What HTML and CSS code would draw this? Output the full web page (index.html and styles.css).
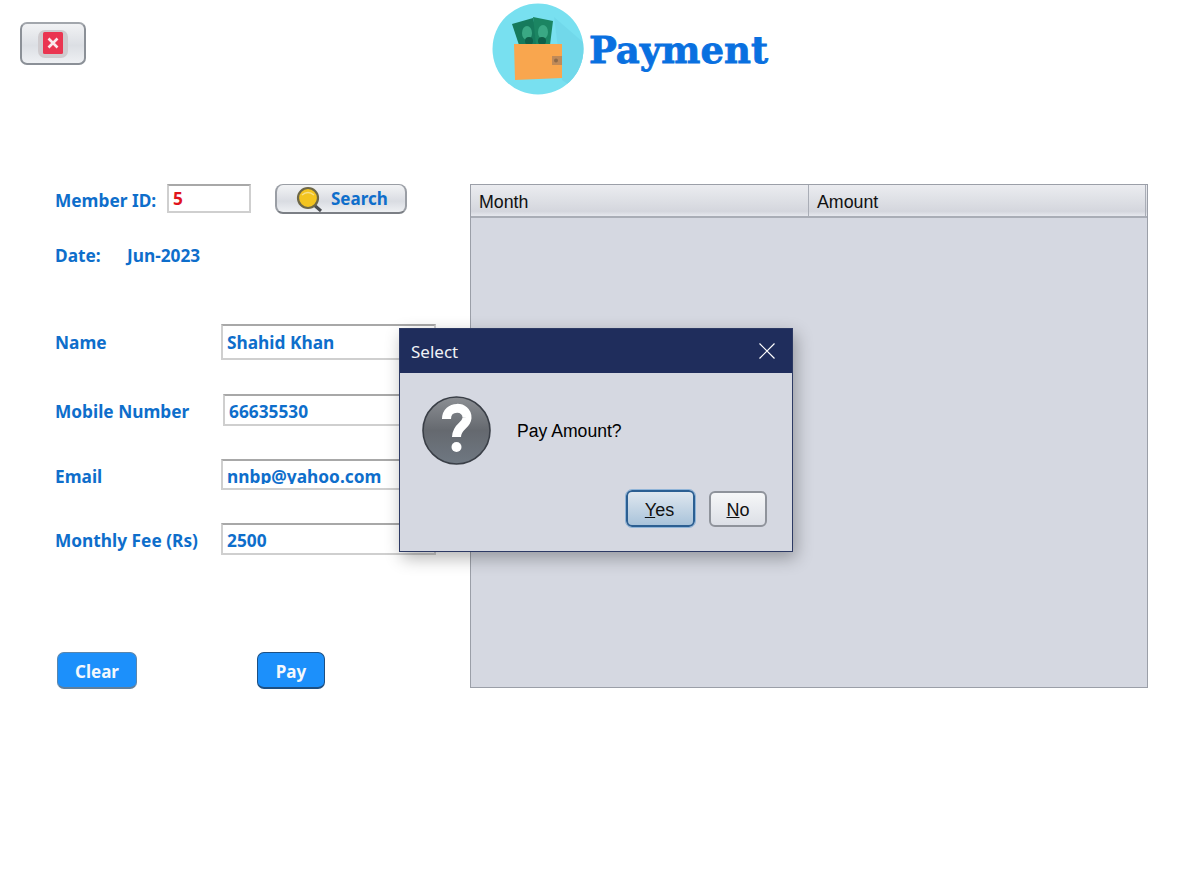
FILE: index.html
```html
<!DOCTYPE html>
<html lang="en">
<head>
<meta charset="UTF-8">
<meta name="viewport" content="width=device-width, initial-scale=1.0">
<title>Payment</title>
<link rel="stylesheet" href="styles.css">
</head>
<body>
<div class="page">
    <header class="top">
        <button class="close-btn" aria-label="Close">
            <svg class="close-icon" width="30" height="30" viewBox="0 0 30 30">
                <rect x="0" y="1" width="30" height="28" rx="7" fill="#cfcbce"/>
                <rect x="5" y="3" width="20" height="22" rx="1.5" fill="#ea3550"/>
                <path d="M10.500 9.500 L19.500 18.500 M19.500 9.500 L10.500 18.500" stroke="#fbe9ec" stroke-width="2.6" fill="none"/>
            </svg>
        </button>
        <div class="brand">
            <svg class="brand-logo" width="92" height="92" viewBox="0 0 92 92">
                <defs><clipPath id="disc"><circle cx="46" cy="46" r="45.5"/></clipPath></defs>
                <circle cx="46" cy="46" r="45.5" fill="#78e0f0"/>
                <g clip-path="url(#disc)">
                    <polygon points="62,14 92,40 92,92 70,77" fill="#71d8ea"/>
                </g>
                <polygon points="20,21 41,15 48,42 27,42" fill="#167a5c"/>
                <polygon points="41,14 61,18 58,42 44,42" fill="#1b8562"/>
                <ellipse cx="35" cy="30" rx="5" ry="7" fill="#3aa884"/>
                <ellipse cx="51" cy="29" rx="5" ry="7" fill="#3aa884"/>
                <circle cx="37" cy="38" r="4" fill="#0f5f48"/>
                <circle cx="50" cy="38" r="4" fill="#0f5f48"/>
                <polygon points="22,41 70,41 70,75 23,77" fill="#f9a64e"/>
                <rect x="60" y="53" width="10" height="9" fill="#c08a58"/>
                <circle cx="64" cy="57.500" r="2" fill="#8f6a48"/>
            </svg>
            <h1 class="brand-title">Payment</h1>
        </div>
    </header>

    <main class="content">
        <section class="form">
            <div class="row row-member">
                <label class="label label-member nudge">Member ID:</label>
                <div class="field field-id"><span class="id-value">5</span></div>
                <button class="search-btn">
                    <svg class="search-icon" width="28" height="28" viewBox="0 0 28 28">
                        <line x1="17" y1="18" x2="25" y2="25" stroke="#4a4d52" stroke-width="3"/>
                        <circle cx="12" cy="12" r="10" fill="#f3c41f" stroke="#6d6748" stroke-width="2.2"/>
                        <path d="M6 9 Q12 4 18 9" stroke="#f7e08a" stroke-width="1.5" fill="none"/>
                    </svg>
                    Search
                </button>
            </div>
            <div class="row row-date">
                <span class="label label-date">Date:</span>
                <span class="label">Jun-2023</span>
            </div>
            <div class="row row-name">
                <label class="label label-wide">Name</label>
                <div class="field field-wide">Shahid Khan</div>
            </div>
            <div class="row row-mobile">
                <label class="label label-wide nudge">Mobile Number</label>
                <div class="field field-wide field-shift nudge">66635530</div>
            </div>
            <div class="row row-email">
                <label class="label label-wide nudge-more">Email</label>
                <div class="field field-wide field-clip"><span>nnbp@yahoo.com</span></div>
            </div>
            <div class="row row-fee">
                <label class="label label-wide nudge">Monthly Fee (Rs)</label>
                <div class="field field-wide nudge">2500</div>
            </div>
            <div class="actions">
                <button class="blue-btn btn-clear">Clear</button>
                <button class="blue-btn btn-pay">Pay</button>
            </div>
        </section>

        <section class="table">
            <div class="table-head">
                <div class="col col-month">Month</div>
                <div class="col col-amount">Amount</div>
            </div>
        </section>
    </main>

    <div class="dialog">
        <div class="dialog-title">
            <span>Select</span>
            <svg width="16" height="16" viewBox="0 0 16 16">
                <path d="M0.5 0.500 L15.500 15.500 M15.500 0.500 L0.500 15.500" stroke="#fff" stroke-width="1.2" fill="none"/>
            </svg>
        </div>
        <div class="dialog-body">
            <div class="dialog-msg">
                <svg class="question" width="69" height="69" viewBox="0 0 69 69">
                    <defs>
                        <linearGradient id="qfill" x1="0" y1="0" x2="0" y2="1">
                            <stop offset="0" stop-color="#8c8f94"/>
                            <stop offset=".5" stop-color="#65696f"/>
                            <stop offset="1" stop-color="#6f7882"/>
                        </linearGradient>
                    </defs>
                    <circle cx="34.500" cy="34.500" r="33.500" fill="url(#qfill)" stroke="#3a3f47" stroke-width="1.6"/>
                    <path d="M24.500 23 C24.500 9 45.500 9 45 22 C44.500 30 34.500 30 34.500 41" fill="none" stroke="#fff" stroke-width="9"/>
                    <circle cx="34.500" cy="51" r="5" fill="#fff"/>
                </svg>
                <p class="dialog-text">Pay Amount?</p>
            </div>
            <div class="dialog-btns">
                <button class="opt-btn opt-yes"><u>Y</u>es</button>
                <button class="opt-btn opt-no"><u>N</u>o</button>
            </div>
        </div>
    </div>
</div>
</body>
</html>
```

FILE: styles.css
```css
* {
    box-sizing: border-box;
}
body {
    margin: 0;
    background: #fff;
    font-family: "Noto Sans", sans-serif;
}
.page {
    position: relative;
    height: 890px;
    overflow: hidden;
}
button {
    font-family: inherit;
    padding: 0;
    cursor: pointer;
}

/* header */
.top {
    display: flex;
    align-items: flex-start;
    height: 184px;
    padding: 3px 0 0 20px;
}
.close-btn {
    display: flex;
    align-items: center;
    justify-content: center;
    width: 66px;
    height: 43px;
    margin-top: 19px;
    border: 2px solid #8b9097;
    border-top-color: #a2a6ac;
    border-radius: 7px;
    background: linear-gradient(#f1f2f4, #dcdfe4 55%, #eef0f3);
}
.brand {
    display: flex;
    align-items: center;
    margin-left: 406px;
}
.brand-logo {
    display: block;
}
.brand-title {
    margin: 1px 0 0 5px;
    font-family: "DejaVu Serif", serif;
    font-size: 37px;
    font-weight: 700;
    color: #0970e0;
    -webkit-text-stroke: .8px #0970e0;
}

/* left form */
.content {
    display: flex;
    padding-left: 55px;
}
.form {
    width: 415px;
}
.row {
    display: flex;
    align-items: center;
}
.label {
    font-size: 17.3px;
    font-weight: 700;
    color: #0e6ecb;
    white-space: nowrap;
}
.nudge {
    padding-top: 2px;
}
.nudge-more {
    padding-top: 4px;
}
.label-member {
    width: 112px;
}
.label-date {
    width: 72px;
}
.label-wide {
    width: 166px;
}
.field {
    display: flex;
    align-items: center;
    background: #fff;
    border: 2px solid #cfcfcf;
    border-top-color: #a8a8a8;
    padding-left: 4px;
    font-size: 17.3px;
    font-weight: 700;
    color: #0e6ecb;
}
.field-id {
    align-self: flex-start;
    width: 84px;
    height: 29px;
}
.id-value {
    color: #e0141c;
}
.field-wide {
    width: 215px;
    height: 100%;
}
.field-shift {
    width: 213px;
    margin-left: 2px;
}
.field-clip {
    overflow: hidden;
    align-items: flex-start;
}
.field-clip span {
    margin-top: 4px;
    height: 19px;
    overflow: hidden;
}
.row-member {
    height: 30px;
}
.search-btn {
    display: flex;
    align-items: center;
    width: 132px;
    height: 30px;
    margin-left: 24px;
    padding-left: 19px;
    border: 2px solid #9a9ea5;
    border-top-width: 1px;
    border-bottom-color: #7b7f85;
    border-radius: 8px;
    background: linear-gradient(#f2f3f5, #d9dce2 60%, #eef0f3);
    font-size: 17px;
    font-weight: 700;
    color: #0e6ecb;
    gap: 7px;
}
.search-icon {
    margin-top: 2px;
}
.row-date {
    height: 30px;
    margin-top: 26px;
}
.row-name {
    height: 36px;
    margin-top: 54px;
}
.row-mobile {
    height: 32px;
    margin-top: 34px;
}
.row-email {
    height: 31px;
    margin-top: 33px;
}
.row-fee {
    height: 32px;
    margin-top: 33px;
}
.actions {
    display: flex;
    margin-top: 97px;
    padding-left: 2px;
}
.blue-btn {
    height: 37px;
    padding-top: 2px;
    border: 1px solid #5a86ad;
    border-bottom: 2px solid #5f7f9c;
    border-radius: 7px;
    background: #1c90fb;
    font-size: 17px;
    font-weight: 700;
    color: #f4f8fc;
}
.btn-clear {
    width: 80px;
}
.btn-pay {
    width: 68px;
    margin-left: 120px;
    border-color: #1d4f82;
}

/* right table */
.table {
    width: 678px;
    height: 504px;
    border: 1px solid #9b9fa8;
    background: #d5d8e1;
}
.table-head {
    display: flex;
    height: 33px;
    padding-right: 1px;
    border-bottom: 2px solid #a9adb6;
    background: linear-gradient(#ebecf0, #dfe1e6 45%, #d4d6dd 85%, #e6e8ee);
    font-family: "Liberation Sans", sans-serif;
    font-size: 17.8px;
    color: #111;
}
.col {
    display: flex;
    align-items: center;
    padding: 3px 0 0 8px;
    border-right: 1px solid #a9adb6;
}
.col-month {
    width: 338px;
}
.col-amount {
    flex: 1;
}

/* dialog sits over the form and the table */
.dialog {
    position: absolute;
    left: 399px;
    top: 328px;
    width: 394px;
    height: 224px;
    display: flex;
    flex-direction: column;
    border: 1px solid #2d3a64;
    background: #d5d8e1;
    box-shadow: 3px 6px 16px rgba(0, 0, 0, .3);
}
.dialog-title {
    display: flex;
    align-items: center;
    justify-content: space-between;
    height: 44px;
    padding: 0 17px 0 11px;
    background: #1f2d5c;
    font-size: 17px;
    color: #f1f2f6;
}
.dialog-body {
    flex: 1;
    padding: 23px 25px 0 22px;
}
.dialog-msg {
    display: flex;
    align-items: center;
}
.question {
    display: block;
    flex: none;
}
.dialog-text {
    margin: 2px 0 0 26px;
    font-family: "Liberation Sans", sans-serif;
    font-size: 17.6px;
    color: #000;
}
.dialog-btns {
    display: flex;
    justify-content: flex-end;
    align-items: flex-end;
    gap: 14px;
    margin-top: 25px;
}
.opt-btn {
    height: 36px;
    padding-top: 3px;
    border-radius: 6px;
    font-family: "Liberation Sans", sans-serif;
    font-size: 18px;
    color: #111;
}
.opt-yes {
    width: 69px;
    height: 37px;
    padding-right: 2px;
    border: 2px solid #2c5f92;
    outline: 1px solid #8fb4d8;
    background: linear-gradient(#dfe7ef, #a9c3da);
}
.opt-no {
    width: 58px;
    border: 2px solid #8f939b;
    background: linear-gradient(#f6f7f8, #dcdfe6);
}
```
